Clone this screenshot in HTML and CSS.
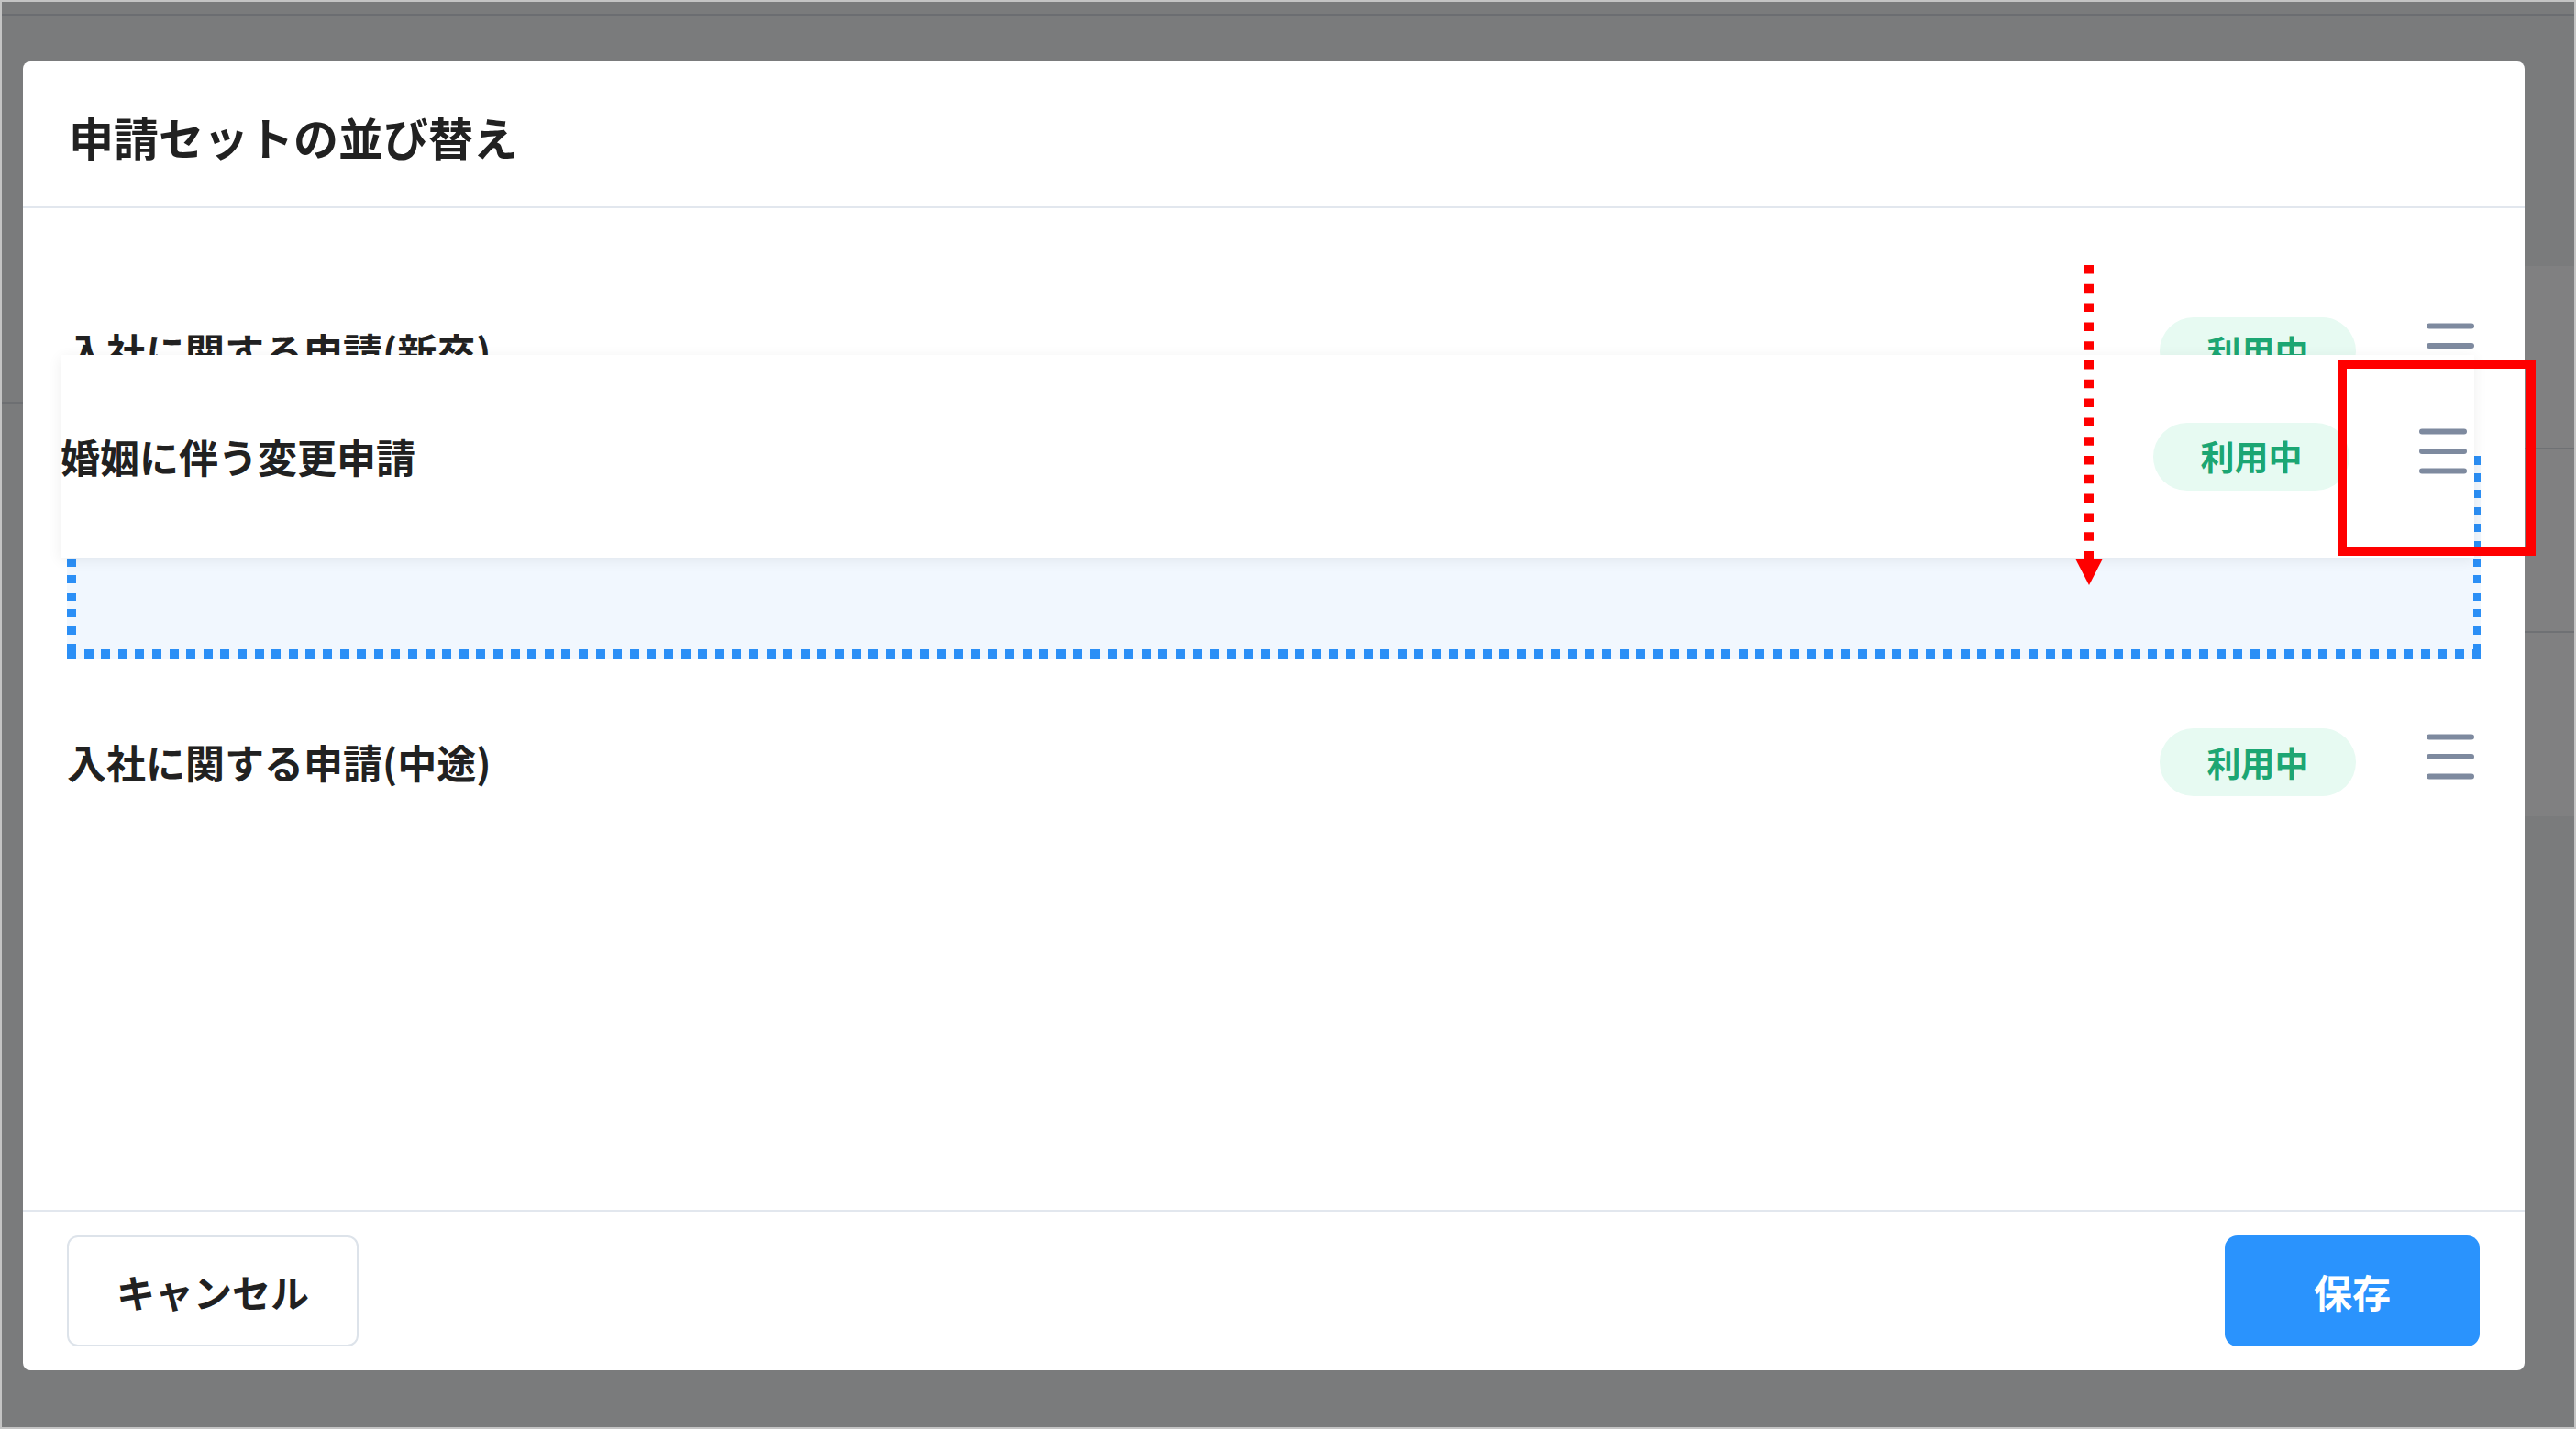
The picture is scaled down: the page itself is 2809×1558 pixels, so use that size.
FILE: index.html
```html
<!DOCTYPE html>
<html lang="ja">
<head>
<meta charset="utf-8">
<title>申請セットの並び替え</title>
<link rel="stylesheet" href="styles.css">
</head>
<body>
<div class="screen">
  <div class="page">
    <div class="topbar"></div>
    <div class="page-body">
      <div class="sidebar"><div class="side-block"></div></div>
      <div class="main">
        <div class="bg-table">
          <div class="bg-row"></div>
          <div class="bg-row"></div>
          <div class="bg-row"></div>
        </div>
      </div>
    </div>
  </div>

  <div class="overlay">
    <div class="modal">
      <div class="modal-header">
        <h2 class="modal-title">申請セットの並び替え</h2>
      </div>
      <div class="modal-body">
        <ul class="set-list">
          <li class="set-row">
            <span class="set-name">入社に関する申請(新卒)</span>
            <span class="badge">利用中</span>
            <svg class="handle" viewBox="0 0 52 50"><line x1="3" y1="3.5" x2="49" y2="3.5"/><line x1="3" y1="25" x2="49" y2="25"/><line x1="3" y1="46.5" x2="49" y2="46.5"/></svg>
          </li>
          <li class="set-row placeholder">
            <div class="drop-zone"></div>
          </li>
          <li class="set-row">
            <span class="set-name">入社に関する申請(中途)</span>
            <span class="badge">利用中</span>
            <svg class="handle" viewBox="0 0 52 50"><line x1="3" y1="3.5" x2="49" y2="3.5"/><line x1="3" y1="25" x2="49" y2="25"/><line x1="3" y1="46.5" x2="49" y2="46.5"/></svg>
          </li>
          <li class="set-row dragging">
            <span class="set-name">婚姻に伴う変更申請</span>
            <span class="badge">利用中</span>
            <svg class="handle" viewBox="0 0 52 50"><line x1="3" y1="3.5" x2="49" y2="3.5"/><line x1="3" y1="25" x2="49" y2="25"/><line x1="3" y1="46.5" x2="49" y2="46.5"/></svg>
          </li>
        </ul>
      </div>
      <div class="modal-footer">
        <button class="btn btn-cancel">キャンセル</button>
        <button class="btn btn-save">保存</button>
      </div>
    </div>

    <div class="annot-box"></div>
    <svg class="annot-arrow" viewBox="0 0 30 350">
      <line x1="15" y1="0" x2="15" y2="320" stroke="#ff0000" stroke-width="10" stroke-dasharray="9.5 11.3"/>
      <polygon points="0,320 30,320 15,349" fill="#ff0000"/>
    </svg>
  </div>
</div>
</body>
</html>
```

FILE: styles.css
```css
* {
  box-sizing: border-box;
}

html, body {
  margin: 0;
  padding: 0;
}

body {
  width: 2809px;
  height: 1558px;
  overflow: hidden;
  font-family: "Noto Sans CJK JP", "Noto Sans", sans-serif;
  background: #7a7b7c;
}

.screen {
  position: relative;
  width: 2809px;
  height: 1558px;
  border: 2px solid #c4c4c4;
  background: #7a7b7c;
  overflow: hidden;
}

/* underlying page (seen through the dark backdrop) */
.page {
  height: 100%;
  display: flex;
  flex-direction: column;
}

.topbar {
  height: 15px;
  flex-shrink: 0;
  border-bottom: 2px solid #6b6d71;
}

.page-body {
  flex: 1;
  display: flex;
}

.sidebar {
  width: 300px;
  flex-shrink: 0;
}

.side-block {
  height: 423px;
  border-bottom: 2px solid #6d6f72;
}

.main {
  flex: 1;
  padding-top: 273px;
}

.bg-table {
  background: #808081;
}

.bg-row {
  height: 200px;
  border-bottom: 2px solid #6f7174;
}

.bg-row:last-child {
  border-bottom: none;
}

/* modal overlay */
.overlay {
  position: absolute;
  inset: 0;
  padding: 65px 54px 62px 23px;
}

.modal {
  height: 100%;
  display: flex;
  flex-direction: column;
  background: #ffffff;
  border-radius: 8px;
}

.modal-header {
  height: 160px;
  flex-shrink: 0;
  display: flex;
  align-items: center;
  padding: 4px 0 0 50px;
  border-bottom: 2px solid #e2e7ee;
}

.modal-title {
  margin: 0;
  font-size: 49px;
  font-weight: 700;
  line-height: 1;
  color: #212121;
}

.modal-body {
  flex: 1;
  padding: 44px 48px 0 48px;
}

.set-list {
  position: relative;
  list-style: none;
  margin: 0;
  padding: 0;
}

.set-row {
  height: 224px;
  display: flex;
  align-items: center;
}

.set-name {
  flex: 1;
  font-size: 43px;
  font-weight: 700;
  line-height: 1.2;
  color: #212121;
  white-space: nowrap;
}

.badge {
  width: 214px;
  height: 74px;
  flex-shrink: 0;
  display: flex;
  align-items: center;
  justify-content: center;
  border-radius: 37px;
  background: #e7faf2;
  color: #1ca673;
  font-size: 37px;
  font-weight: 700;
  line-height: 1;
}

.handle {
  width: 52px;
  height: 50px;
  flex-shrink: 0;
  margin: 0 7px 12px 77px;
  stroke: #7e8a9f;
  stroke-width: 6;
  stroke-linecap: round;
}

.drop-zone {
  width: 100%;
  height: 221px;
  background:
    repeating-linear-gradient(90deg, #2b8ff6 0 10px, transparent 10px 18.6px) left top / 100% 10px no-repeat,
    repeating-linear-gradient(90deg, #2b8ff6 0 10px, transparent 10px 18.6px) left bottom / 100% 10px no-repeat,
    repeating-linear-gradient(180deg, #2b8ff6 0 9px, transparent 9px 18.6px) left top / 10px 100% no-repeat,
    repeating-linear-gradient(180deg, #2b8ff6 0 9px, transparent 9px 18.6px) right top / 8px 100% no-repeat,
    #f1f7fe;
}

.dragging {
  position: absolute;
  left: -7px;
  top: 116px;
  width: 100%;
  height: 221px;
  background: #ffffff;
  box-shadow: 0 3px 14px rgba(0, 0, 0, 0.07);
}

.dragging .handle {
  margin-right: 8px;
  margin-left: 76px;
}

.modal-footer {
  height: 175px;
  flex-shrink: 0;
  display: flex;
  align-items: center;
  justify-content: space-between;
  padding: 0 49px 0 48px;
  border-top: 2px solid #e2e7ee;
}

.btn {
  height: 121px;
  font-family: inherit;
  font-size: 42px;
  font-weight: 700;
  line-height: 1;
  cursor: pointer;
}

.btn-cancel {
  width: 318px;
  background: #ffffff;
  color: #212121;
  border: 2px solid #dde3ea;
  border-radius: 12px;
}

.btn-save {
  width: 278px;
  background: #2a93fd;
  color: #ffffff;
  border: none;
  border-radius: 14px;
}

/* annotations */
.annot-box {
  position: absolute;
  left: 2547px;
  top: 390px;
  width: 216px;
  height: 214px;
  border: 10px solid #ff0000;
}

.annot-arrow {
  position: absolute;
  left: 2261px;
  top: 287px;
  width: 30px;
  height: 350px;
}
```
